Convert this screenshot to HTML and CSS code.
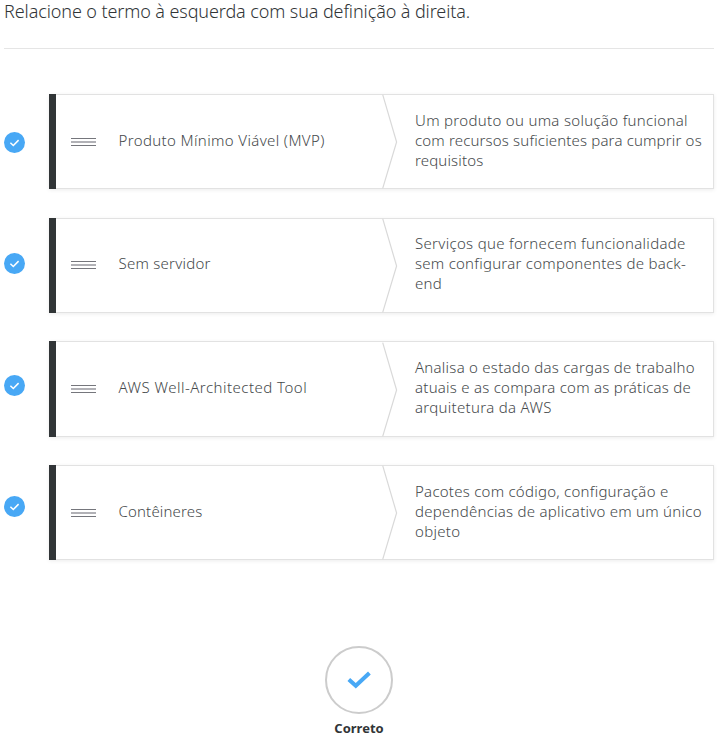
FILE: index.html
```html
<!DOCTYPE html>
<html lang="pt-BR">
<head>
<meta charset="utf-8">
<title>Relacione os termos</title>
<link rel="stylesheet" href="styles.css">
</head>
<body>
<svg class="defs" aria-hidden="true">
  <symbol id="badge" viewBox="0 0 21 21"><circle cx="10.5" cy="10.5" r="10.5" fill="#48a8f5"/><path d="M6.4 10.7l2.9 2.8 5.3-5.4" fill="none" stroke="#fff" stroke-width="1.5"/></symbol>
  <symbol id="handle" viewBox="0 0 25 8"><path d="M0 .5h25M0 7.5h25" stroke="#75767c"/><path d="M0 4h25" stroke="#b1b1b6" stroke-width="2"/></symbol>
  <symbol id="arrow" viewBox="0 0 16 95"><path d="M.7.7L14.6 48 .7 94.3" fill="none" stroke="#d9d9d9" stroke-width="1.2"/></symbol>
</svg>
<main class="activity">
  <h1 class="question">Relacione o termo à esquerda com sua definição à direita.</h1>
  <div class="matching">
    <div class="marks">
      <svg><use href="#badge"/></svg>
      <svg><use href="#badge"/></svg>
      <svg><use href="#badge"/></svg>
      <svg><use href="#badge"/></svg>
    </div>
    <div class="pairs">
      <div class="pair">
        <svg class="handle"><use href="#handle"/></svg><p class="term wide">Produto Mínimo Viável (MVP)</p>
        <svg class="arrow"><use href="#arrow"/></svg>
        <p class="definition"><span class="loose">Um produto ou uma solução funcional</span><br><span class="tight">com recursos suficientes para cumprir os</span><br><span class="tight">requisitos</span></p>
      </div>
      <div class="pair">
        <svg class="handle"><use href="#handle"/></svg><p class="term">Sem servidor</p>
        <svg class="arrow"><use href="#arrow"/></svg>
        <p class="definition"><span class="loose">Serviços que fornecem funcionalidade</span><br>sem configurar componentes de back-<br>end</p>
      </div>
      <div class="pair">
        <svg class="handle"><use href="#handle"/></svg><p class="term widest">AWS Well-Architected Tool</p>
        <svg class="arrow"><use href="#arrow"/></svg>
        <p class="definition">Analisa o estado das cargas de trabalho<br>atuais e as compara com as práticas de<br><span class="loose">arquitetura da AWS</span></p>
      </div>
      <div class="pair">
        <svg class="handle"><use href="#handle"/></svg><p class="term tight">Contêineres</p>
        <svg class="arrow"><use href="#arrow"/></svg>
        <p class="definition">Pacotes com código, configuração e<br>dependências de aplicativo em um único<br><span class="loose">objeto</span></p>
      </div>
    </div>
  </div>
  <div class="result">
    <div class="ring"><svg viewBox="0 0 24 18"><path d="M1.8 8.4l7 6.4L22.4 2" fill="none" stroke="#48a8f5" stroke-width="4"/></svg></div>
    <p class="verdict">Correto</p>
  </div>
</main>
</body>
</html>
```

FILE: styles.css
```css
* { box-sizing: border-box; }
body { margin: 0; background: #fff; color: #313537; font-family: "Noto Sans", sans-serif; overflow: hidden; }
h1, p { margin: 0; }
svg { display: block; }
.defs { display: none; }
.activity { width: 723px; padding: 0 9px 0 4px; }
.question { height: 49px; border-bottom: 1px solid #e5e5e5; font-size: 18px; line-height: 22px; font-weight: 300; letter-spacing: -.1px; white-space: nowrap; }
.matching { display: flex; gap: 24px; padding-top: 45px; }
.marks { width: 21px; display: flex; flex-direction: column; gap: 100.5px; padding-top: 37.5px; }
.marks svg { width: 21px; height: 21px; flex: none; }
.pairs { flex: 1; display: flex; flex-direction: column; gap: 28.3px; }
.pair { height: 95.4px; display: flex; align-items: center; border: solid #e2e2e2; border-width: 1px 1px 1px 0; box-shadow: 0 1px 4px rgba(0,0,0,.08); color: #45494b; font-size: 15px; line-height: 20px; font-weight: 300; letter-spacing: .25px; white-space: nowrap; }
.pair::before { content: ""; width: 7px; height: 95.4px; margin: -1px 0; background: #313537; flex: none; }
.handle { width: 25px; height: 8px; margin: 0 22.5px 0 15px; flex: none; }
.term { width: 263.5px; padding-bottom: 4px; }
.wide { letter-spacing: .37px; }
.widest { letter-spacing: .48px; }
.loose { letter-spacing: .31px; }
.tight { letter-spacing: .16px; }
.arrow { width: 16px; height: 95px; margin: -1px 17px -1px 0; flex: none; }
.definition { padding-bottom: 4px; }
.result { display: flex; flex-direction: column; align-items: center; padding-top: 85.5px; }
.ring { width: 68px; height: 68px; border: 2px solid #ccc; border-radius: 50%; display: flex; align-items: center; justify-content: center; }
.ring svg { width: 24px; height: 18px; }
.verdict { font-size: 13px; line-height: 18px; font-weight: 700; margin-top: 5px; }
```
